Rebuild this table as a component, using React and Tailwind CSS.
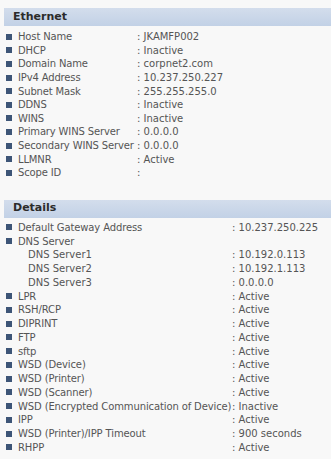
import React from "react";

const ethernet = [
  ["Host Name", "JKAMFP002"],
  ["DHCP", "Inactive"],
  ["Domain Name", "corpnet2.com"],
  ["IPv4 Address", "10.237.250.227"],
  ["Subnet Mask", "255.255.255.0"],
  ["DDNS", "Inactive"],
  ["WINS", "Inactive"],
  ["Primary WINS Server", "0.0.0.0"],
  ["Secondary WINS Server", "0.0.0.0"],
  ["LLMNR", "Active"],
  ["Scope ID", ""],
];

const details = [
  ["Default Gateway Address", "10.237.250.225"],
  ["DNS Server", null],
  ["DNS Server1", "10.192.0.113", true],
  ["DNS Server2", "10.192.1.113", true],
  ["DNS Server3", "0.0.0.0", true],
  ["LPR", "Active"],
  ["RSH/RCP", "Active"],
  ["DIPRINT", "Active"],
  ["FTP", "Active"],
  ["sftp", "Active"],
  ["WSD (Device)", "Active"],
  ["WSD (Printer)", "Active"],
  ["WSD (Scanner)", "Active"],
  ["WSD (Encrypted Communication of Device)", "Inactive"],
  ["IPP", "Active"],
  ["WSD (Printer)/IPP Timeout", "900 seconds"],
  ["RHPP", "Active"],
];

const Header = ({ title }) => (
  <div className="ml-[4px] h-[18px] flex items-center pl-[9px] bg-gradient-to-b from-[#d3ddec] to-[#c2d1e6] text-[#2b2b2b] font-bold text-[11px]">
    {title}
  </div>
);

const Row = ({ label, value, sub, eth, h }) => (
  <div className={`flex items-center whitespace-nowrap ${h}`}>
    {sub ? (
      <span className="w-[28px] shrink-0" />
    ) : (
      <span className="ml-[6px] mr-[6px] w-[6px] h-[6px] shrink-0 bg-[#3d5577]" />
    )}
    <span
      className={
        eth
          ? "w-[119px] shrink-0 tracking-[-0.15px]"
          : sub
          ? "w-[204px] shrink-0"
          : "w-[214px] shrink-0 tracking-[-0.12px]"
      }
    >
      {label}
    </span>
    {value !== null && <span>: {value}</span>}
  </div>
);

const App = () => {
  return (
    <div
      className="w-[331px] h-[459px] bg-[#f8f8f8] pt-[8px] text-[10px] text-[#555] overflow-hidden"
      style={{ fontFamily: '"DejaVu Sans", Verdana, sans-serif' }}
    >
      <Header title="Ethernet" />
      <div className="pt-[4px]">
        {ethernet.map(([l, v]) => (
          <Row key={l} label={l} value={v} eth h="h-[13.6px]" />
        ))}
      </div>
      <div className="h-[20px]" />
      <Header title="Details" />
      <div className="pt-[3px]">
        {details.map(([l, v, sub]) => (
          <Row key={l} label={l} value={v} sub={sub} h="h-[13.75px]" />
        ))}
      </div>
    </div>
  );
};

export default App;
